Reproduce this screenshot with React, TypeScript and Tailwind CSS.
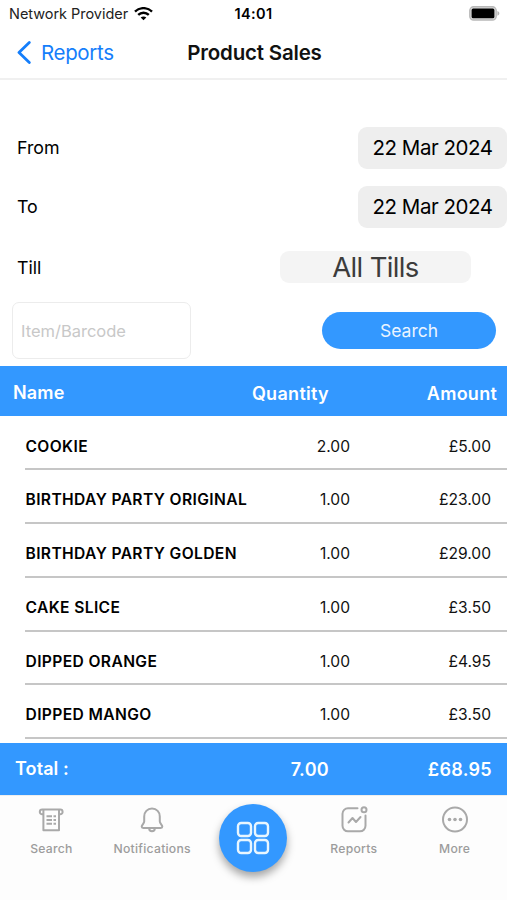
import React from "react";

type Sale = { name: string; quantity: string; amount: string };

const sales: Sale[] = [
  { name: "COOKIE", quantity: "2.00", amount: "£5.00" },
  { name: "BIRTHDAY PARTY ORIGINAL", quantity: "1.00", amount: "£23.00" },
  { name: "BIRTHDAY PARTY GOLDEN", quantity: "1.00", amount: "£29.00" },
  { name: "CAKE SLICE", quantity: "1.00", amount: "£3.50" },
  { name: "DIPPED ORANGE", quantity: "1.00", amount: "£4.95" },
  { name: "DIPPED MANGO", quantity: "1.00", amount: "£3.50" },
];

function WifiIcon() {
  return (
    <svg width="19" height="14" viewBox="0 0 19 14" fill="none" stroke="#000" strokeWidth="2.4">
      <path d="M1 4.600C5.700 0 13.300 0 18 4.600" />
      <path d="M4.200 7.900c3-2.900 7.600-2.900 10.600 0" />
      <path d="M9.500 13.200 6.700 10.500c1.600-1.500 4-1.500 5.600 0Z" fill="#000" stroke="none" />
    </svg>
  );
}

function BatteryIcon() {
  return (
    <svg width="31" height="15" viewBox="0 0 31 15">
      <rect x=".8" y=".8" width="26.400" height="13.200" rx="3.800" fill="#ddd" stroke="#b8b8b8" strokeWidth="1.400" />
      <rect x="2.600" y="2.600" width="22.800" height="9.600" rx="1.500" fill="#000" />
      <path d="M28.400 5c2.600.9 2.600 3.900 0 4.800Z" fill="#b5b5b5" />
    </svg>
  );
}

function StatusBar() {
  return (
    <div className="grid h-[27px] grid-cols-[1fr_auto_1fr] items-center pl-[9px] pr-[7px]">
      <div className="flex items-center gap-[6px]">
        <span className="whitespace-nowrap text-[14.500px] tracking-[-0.040px] text-[#222]">Network Provider</span>
        <WifiIcon />
      </div>
      <span className="pr-[2px] text-[14.500px] font-semibold tracking-[0.400px]">14:01</span>
      <div className="flex justify-end">
        <BatteryIcon />
      </div>
    </div>
  );
}

function NavBar() {
  return (
    <div className="grid h-[53px] grid-cols-[1fr_auto_1fr] items-center border-b-2 border-[#f0f0f0] pl-[17px] pr-[15px] pt-[1px]">
      <div className="flex items-center gap-[10px] text-[#147efb]">
        <svg width="14" height="24" viewBox="0 0 14 24" fill="none" stroke="currentColor" strokeWidth="2.800" strokeLinecap="round" strokeLinejoin="round">
          <path d="M12.300 1.500 2 11.500l10.300 10" />
        </svg>
        <span className="text-[20.500px] tracking-[-0.350px]">Reports</span>
      </div>
      <h1 className="text-[20.500px] font-semibold tracking-[-0.200px] text-[#111]">Product Sales</h1>
      <span />
    </div>
  );
}

function DateRow({ label, value }: { label: string; value: string }) {
  return (
    <div className="flex h-[42px] items-center justify-between pl-[17px]">
      <span className="pt-[1px] text-[17.800px]">{label}</span>
      <span className="flex h-[42px] w-[149px] items-center justify-center rounded-[9px] bg-[#eee] pt-[1px] text-[20.500px] tracking-[-0.450px]">
        {value}
      </span>
    </div>
  );
}

function Filters() {
  return (
    <section className="flex h-[286px] flex-col pt-[47px]">
      <DateRow label="From" value="22 Mar 2024" />
      <div className="h-[16.500px]" />
      <DateRow label="To" value="22 Mar 2024" />
      <div className="mt-[23.500px] flex h-[32px] items-center justify-between pl-[17px] pr-[36px]">
        <span className="pt-[2px] text-[17.800px]">Till</span>
        <span className="flex h-[32px] w-[191px] items-center justify-center rounded-[9px] bg-[#f4f4f4] pt-[2px] text-[27.500px] tracking-[-0.650px] text-[#3c3c3c]">
          All Tills
        </span>
      </div>
      <div className="mt-[19px] flex items-center justify-between pl-[12px] pr-[11px]">
        <div className="flex h-[57px] w-[179px] items-center rounded-[7px] border border-[#ececec] pl-[8px] pt-[1px] text-[16.500px] text-[#c8c8c8]">
          Item/Barcode
        </div>
        <button className="h-[37px] w-[174px] rounded-full bg-[#3398ff] pt-[1px] text-[17.500px] text-[#eaf4ff]">Search</button>
      </div>
    </section>
  );
}

function SalesTable() {
  return (
    <section>
      <div className="grid h-[50px] grid-cols-[1fr_120px_168px] items-center bg-[#3398ff] pl-[13px] pr-[10px] pt-[4px] text-[18px] font-semibold tracking-[0.150px] text-white">
        <span className="-mt-[2px]">Name</span>
        <span className="text-right tracking-[0.300px]">Quantity</span>
        <span className="text-right tracking-[0.250px]">Amount</span>
      </div>
      <div className="h-[326.500px] pt-[0.700px]">
        {sales.map((sale) => (
          <div
            key={sale.name}
            className="ml-[25px] grid h-[53.750px] grid-cols-[1fr_80px_141px] items-center border-b-2 border-[#c6c6c6] pr-[16px] pt-[7.500px] text-[15.600px] text-[#111]"
          >
            <span className="whitespace-nowrap pl-[0.500px] font-semibold tracking-[0.380px] text-black">{sale.name}</span>
            <span className="text-right">{sale.quantity}</span>
            <span className="text-right">{sale.amount}</span>
          </div>
        ))}
      </div>
      <div className="grid h-[52.500px] grid-cols-[1fr_120px_163px] items-center bg-[#3398ff] pl-[15px] pr-[15px] pt-[2px] text-[18px] font-semibold tracking-[0.300px] text-white">
        <span className="-mt-[2px] tracking-[0.100px]">Total :</span>
        <span className="text-right">7.00</span>
        <span className="text-right">£68.95</span>
      </div>
    </section>
  );
}

function ReceiptIcon() {
  return (
    <svg width="26" height="26" viewBox="0 0 26 26" fill="none" stroke="#a9a9a9" strokeWidth="2" strokeLinejoin="round">
      <path d="M5.400 7.300H4.200a2.200 2.200 0 1 1 0-4.800h18a2.200 2.200 0 1 1 0 4.800H21" />
      <path d="M5.400 3v20.300H21V3" />
      <path d="M8.500 9.200h5.500M8.500 13h5.500M8.500 16.800h5.500M15.500 9.200H18M15.500 13H18M15.500 16.800H18" />
    </svg>
  );
}

function BellIcon() {
  return (
    <svg width="26" height="26" viewBox="0 0 26 26" fill="none" stroke="#a9a9a9" strokeWidth="2" strokeLinecap="round" strokeLinejoin="round">
      <path d="M13 1.600c-4.700 0-7.800 3.400-7.800 7.800v5.200c0 1.800-2.500 3.600-2.500 5 0 .9.700 1.400 1.500 1.400h17.600c.8 0 1.500-.5 1.500-1.400 0-1.400-2.500-3.200-2.500-5V9.400c0-4.400-3.100-7.800-7.800-7.800Z" />
      <path d="M10.200 21.500a2.800 2.800 0 0 0 5.600 0" />
    </svg>
  );
}

function ChartIcon() {
  return (
    <svg width="28" height="28" viewBox="0 0 28 28" fill="none" stroke="#a9a9a9" strokeWidth="2" strokeLinecap="round" strokeLinejoin="round">
      <path d="M17.500 2.300H8a5.500 5.500 0 0 0-5.500 5.500v12A5.500 5.500 0 0 0 8 25.300h12a5.500 5.500 0 0 0 5.500-5.500V9.500" />
      <circle cx="24" cy="3.700" r="2.500" />
      <path d="m8.500 16.500 4-4.500 3.500 4 4.500-5" />
    </svg>
  );
}

function MoreIcon() {
  return (
    <svg width="28" height="28" viewBox="0 0 28 28" fill="none" stroke="#a9a9a9" strokeWidth="2">
      <circle cx="14" cy="13.500" r="12" />
      <g fill="#a9a9a9" stroke="none">
        <circle cx="8.500" cy="13.500" r="1.800" />
        <circle cx="14" cy="13.500" r="1.800" />
        <circle cx="19.500" cy="13.500" r="1.800" />
      </g>
    </svg>
  );
}

function Tab({ label, icon }: { label: string; icon: React.ReactNode }) {
  return (
    <div className="flex flex-col items-center pt-[9px]">
      <div className="flex h-[30px] items-center justify-center">{icon}</div>
      <span className="mt-[5px] text-[12.200px] font-medium leading-[18px] tracking-[0.250px] text-[#9c9c9c]">{label}</span>
    </div>
  );
}

function TabBar() {
  return (
    <nav className="grid flex-1 grid-cols-5 items-start border-t border-[#eee] bg-[#fdfdfd] pl-px pr-[2px]">
      <Tab label="Search" icon={<ReceiptIcon />} />
      <Tab label="Notifications" icon={<BellIcon />} />
      <div className="flex justify-center pl-[1px] pt-[8px]">
        <button className="flex size-[68px] items-center justify-center rounded-full bg-[#3398ff] shadow-[0_5px_8px_rgba(0,0,0,0.35)]">
          <svg width="34" height="34" viewBox="0 0 34 34" fill="none" stroke="#e8f6ff" strokeWidth="2.400">
            <rect x="2" y="2" width="13" height="13" rx="3.200" />
            <rect x="19" y="2" width="13" height="13" rx="3.200" />
            <rect x="2" y="19" width="13" height="13" rx="3.200" />
            <rect x="19" y="19" width="13" height="13" rx="3.200" />
          </svg>
        </button>
      </div>
      <Tab label="Reports" icon={<ChartIcon />} />
      <Tab label="More" icon={<MoreIcon />} />
    </nav>
  );
}

export default function App() {
  return (
    <main className="flex h-[900px] w-[507px] flex-col overflow-hidden bg-white font-['Inter','Liberation_Sans',sans-serif] text-black">
      <StatusBar />
      <NavBar />
      <Filters />
      <SalesTable />
      <TabBar />
    </main>
  );
}
